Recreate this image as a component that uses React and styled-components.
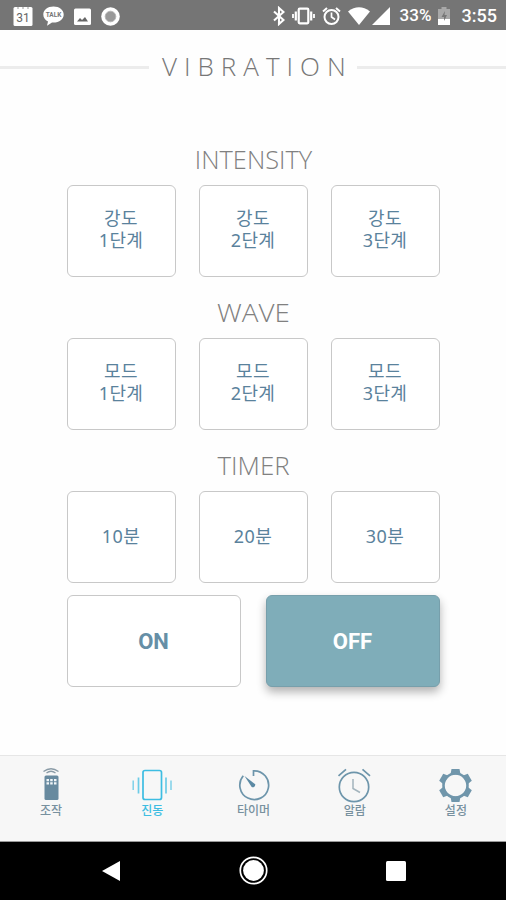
import React from "react"
import { useState } from "react"
import styled, { createGlobalStyle } from "styled-components"

const intensity = [["강도", "1단계"], ["강도", "2단계"], ["강도", "3단계"]];
const wave = [["모드", "1단계"], ["모드", "2단계"], ["모드", "3단계"]];
const timer = [["10분"], ["20분"], ["30분"]];

const tabs = [
    { name: "조작", icon: <RemoteIcon /> },
    { name: "진동", icon: <VibrationIcon /> },
    { name: "타이머", icon: <TimerIcon /> },
    { name: "알람", icon: <AlarmIcon /> },
    { name: "설정", icon: <GearIcon /> },
];

export default function App() {
    const [power, setPower] = useState("OFF");
    const [tab, setTab] = useState("진동");
    return (
        <>
            <GlobalStyle />
            <Screen>
                <StatusBar />
                <Header>
                    <Line />
                    <Title>VIBRATION</Title>
                    <Line />
                </Header>
                <Content>
                    <Group title="INTENSITY" stretch={1.015} items={intensity} />
                    <Group title="WAVE" stretch={1.11} items={wave} />
                    <Group title="TIMER" stretch={1.035} items={timer} />
                    <PowerRow>
                        <PowerButton $active={power === "ON"} onClick={() => setPower("ON")}>ON</PowerButton>
                        <PowerButton $active={power === "OFF"} onClick={() => setPower("OFF")}>OFF</PowerButton>
                    </PowerRow>
                </Content>
                <TabBar>
                    {tabs.map((item) => (
                        <Tab key={item.name} $active={item.name === tab} onClick={() => setTab(item.name)}>
                            {item.icon}
                            <p>{item.name}</p>
                        </Tab>
                    ))}
                </TabBar>
                <NavBar>
                    <svg width="20" height="22" viewBox="0 0 20 22"><path d="M1 11L19 1V21Z" fill="#fff" /></svg>
                    <svg width="30" height="30" viewBox="0 0 30 30">
                        <circle cx="14.500" cy="14.500" r="13.200" fill="none" stroke="#fff" strokeWidth="1.700" />
                        <circle cx="14.500" cy="14.500" r="10.400" fill="#fff" />
                    </svg>
                    <svg width="20" height="20" viewBox="0 0 20 20"><rect width="20" height="20" rx="1.500" fill="#fff" /></svg>
                </NavBar>
            </Screen>
        </>
    );
}

function Group({ title, stretch, items }) {
    return (
        <Section>
            <SectionTitle $stretch={stretch}>{title}</SectionTitle>
            <ButtonRow>
                {items.map((lines) => (
                    <OptionButton key={lines.join("")} $lines={lines.length}>
                        {lines.map((line) => <span key={line}>{line}</span>)}
                    </OptionButton>
                ))}
            </ButtonRow>
        </Section>
    );
}

function StatusBar() {
    return (
        <Status>
            <StatusLeft>
                <svg width="20" height="22" viewBox="0 0 20 22">
                    <rect x="0.500" y="2" width="19" height="19" rx="1.500" fill="#fff" />
                    <path d="M5 2V4M10 2V4M15 2V4" stroke="#999" strokeWidth="1" />
                    <text x="10" y="17" textAnchor="middle" fontSize="12" fontWeight="400" fill="#666">31</text>
                </svg>
                <svg width="21" height="22" viewBox="0 0 21 22">
                    <path d="M10.500 1.500C4.700 1.500 .3 5 .3 9.500C.3 12.500 2 15 5 16.400L4 20.800L9 17.500C16 18 20.700 14.300 20.700 9.500C20.700 5 16.300 1.500 10.500 1.500Z" fill="#fff" />
                    <text x="10.500" y="11.800" textAnchor="middle" fontSize="6.500" fontWeight="700" fill="#777">TALK</text>
                </svg>
                <svg width="17" height="22" viewBox="0 0 17 22">
                    <rect x="0" y="3.500" width="17" height="16.500" rx="1.500" fill="#fff" />
                    <path d="M3 16.500L6 13L8 15L11 12L14 16.500Z" fill="#666" />
                </svg>
                <svg width="19" height="22" viewBox="0 0 19 22">
                    <circle cx="9.500" cy="11.500" r="9.300" fill="#fff" />
                    <circle cx="9.500" cy="11.500" r="5.300" fill="#999" stroke="#b4b4b4" />
                </svg>
            </StatusLeft>
            <StatusRight>
                <svg width="12" height="20" viewBox="0 0 12 20">
                    <path d="M1 5.500L10.500 14L6 18V2L10.500 6L1 14.500" fill="none" stroke="#fff" strokeWidth="2.100" />
                </svg>
                <svg width="23" height="20" viewBox="0 0 23 20">
                    <rect x="6.700" y="2.700" width="9.600" height="14.600" rx="1" fill="none" stroke="#fff" strokeWidth="2.200" />
                    <path d="M3.800 5.500V14.500M19.200 5.500V14.500" stroke="#fff" strokeWidth="2.200" />
                    <path d="M1 8V12M22 8V12" stroke="#fff" strokeWidth="1.800" />
                </svg>
                <svg width="19" height="20" viewBox="0 0 19 20">
                    <circle cx="9.500" cy="11" r="7" fill="none" stroke="#fff" strokeWidth="2" />
                    <path d="M9.500 6.500V11L13 13.500" fill="none" stroke="#fff" strokeWidth="1.700" />
                    <path d="M1 5.500L5 2M18 5.500L14 2" stroke="#fff" strokeWidth="2" />
                </svg>
                <svg width="22" height="20" viewBox="0 0 22 20"><path d="M0 5.500Q11 -2.800 22 5.500L11 19Z" fill="#fff" /></svg>
                <svg width="18" height="20" viewBox="0 0 18 20"><path d="M18 1V19H0Z" fill="#fff" /></svg>
                <Percent>33%</Percent>
                <svg width="12" height="20" viewBox="0 0 12 20">
                    <path d="M3.500 1H8.500V3H12V19H0V3H3.500Z" fill="#a8a8a8" />
                    <path d="M0 13H12V19H0Z" fill="#fff" />
                    <path d="M7 5L3.500 11H6V15L9 9H6.500Z" fill="#777" />
                </svg>
                <Clock>3:55</Clock>
            </StatusRight>
        </Status>
    );
}

function RemoteIcon() {
    return (
        <svg width="44" height="36" viewBox="0 0 44 36">
            <path d="M14.500 4.500Q22 -1 29.500 4.500" fill="none" stroke="#8a9ba6" strokeWidth="1.300" />
            <path d="M17.500 6Q22 2.500 26.500 6" fill="none" stroke="#8a9ba6" strokeWidth="1.300" />
            <rect x="15.500" y="8.500" width="14" height="24.500" rx="1.500" fill="#688a9f" />
            <path d="M17.500 12H20V14.300H17.500ZM21.200 12H23.700V14.300H21.200ZM25 12H27.500V14.300H25ZM17.500 15.300H20V17.600H17.500ZM21.200 15.300H23.700V17.600H21.200ZM25 15.300H27.500V17.600H25Z" fill="#f1f6f9" />
        </svg>
    );
}

function VibrationIcon() {
    return (
        <svg width="44" height="36" viewBox="0 0 44 36" fill="none" stroke="#3dbde2">
            <rect x="13" y="3.500" width="18.500" height="29" rx="2" strokeWidth="1.700" />
            <path d="M8.500 10.500V26.500M36 10.500V26.500" strokeWidth="1.700" opacity="0.75" />
            <path d="M3.200 13.500V23M41 13.500V23" strokeWidth="1.500" opacity="0.65" />
        </svg>
    );
}

function TimerIcon() {
    return (
        <svg width="44" height="36" viewBox="0 0 44 36" fill="none" stroke="#6d95ab">
            <path d="M22.500 9V3.800A14.400 14.400 0 1 1 12.300 8.800" strokeWidth="1.700" />
            <path d="M13.500 9L24.200 17.200A2.500 2.500 0 0 1 20.700 20Z" fill="#5c8aa4" stroke="none" />
        </svg>
    );
}

function AlarmIcon() {
    return (
        <svg width="44" height="36" viewBox="0 0 44 36" fill="none" stroke="#6d95ab">
            <circle cx="22" cy="20" r="14.700" strokeWidth="1.700" />
            <path d="M6.500 8.800L14 2.300M38 8.800L30.500 2.300" strokeWidth="1.700" />
            <path d="M21 12V21.500L28 25.500" stroke="#a3b4bd" strokeWidth="1.500" />
        </svg>
    );
}

function GearIcon() {
    return (
        <svg width="44" height="36" viewBox="0 0 44 36">
            <circle cx="22.500" cy="18.500" r="12" fill="none" stroke="#7096ab" strokeWidth="2.600" />
            {[0, 60, 120, 180, 240, 300].map((angle) => (
                <path key={angle} d="M18.500 2H26.500L27.500 7.500H17.500Z" transform={`rotate(${angle} 22.5 18.5)`} fill="#7096ab" />
            ))}
        </svg>
    );
}

const GlobalStyle = createGlobalStyle`
  * {
    box-sizing: border-box;
  }
  body {
    margin: 0;
    background: #fefefe;
    font-family: "Noto Sans", "Noto Sans CJK KR", sans-serif;
  }
  p, h1, h2 {
    margin: 0;
  }
  svg {
    display: block;
    flex-shrink: 0;
  }
  button {
    font-family: inherit;
    padding: 0;
    cursor: pointer;
  }
`;

const Screen = styled.div`
  width: 506px;
  height: 900px;
  display: flex;
  flex-direction: column;
  overflow: hidden;
`;

const Status = styled.div`
  height: 30px;
  flex-shrink: 0;
  background: #757575;
  color: #ffffff;
  display: flex;
  align-items: center;
  justify-content: space-between;
  padding: 1px 9px 0 13px;
  font-family: Roboto, sans-serif;
  font-weight: 500;
`;

const StatusLeft = styled.div`
  display: flex;
  gap: 10px;
`;

const StatusRight = styled.div`
  display: flex;
  align-items: center;
  gap: 7px;
  svg:nth-of-type(5) {
    margin-left: -5px;
  }
`;

const Percent = styled.span`
  width: 33px;
  margin-left: 3px;
  margin-right: -2px;
  font-size: 17px;
  line-height: 29px;
  white-space: nowrap;
`;

const Clock = styled.span`
  font-size: 18px;
  line-height: 29px;
  margin-left: 5px;
`;

const Header = styled.div`
  height: 74px;
  flex-shrink: 0;
  display: flex;
  align-items: center;
  justify-content: space-between;
`;

const Line = styled.div`
  width: 149px;
  height: 3px;
  background: #ececec;
`;

const Title = styled.h1`
  width: 184px;
  padding-left: 1px;
  padding-bottom: 2px;
  font-family: "Open Sans", sans-serif;
  font-size: 26px;
  font-weight: 300;
  line-height: 36px;
  letter-spacing: 7px;
  color: #777777;
  white-space: nowrap;
`;

const Content = styled.div`
  width: 373px;
  margin: 0 auto;
  padding-top: 40px;
  flex: 1;
`;

const Section = styled.div`
  height: 153px;
`;

const SectionTitle = styled.h2`
  height: 41px;
  font-family: "Open Sans", sans-serif;
  font-size: 25px;
  font-weight: 300;
  line-height: 30px;
  text-align: center;
  color: #808080;
  transform: scaleX(${(props) => props.$stretch});
`;

const ButtonRow = styled.div`
  display: flex;
  justify-content: space-between;
`;

const Button = styled.button`
  height: 92px;
  background: #ffffff;
  border: 1px solid #c8c8c8;
  border-radius: 6px;
  display: flex;
  flex-direction: column;
  align-items: center;
  justify-content: center;
`;

const OptionButton = styled(Button)`
  width: 109px;
  padding-bottom: ${(props) => (props.$lines > 1 ? "4px" : "3px")};
  color: #5a829c;
  font-size: 18px;
  line-height: 22px;
  letter-spacing: 0.4px;
`;

const PowerRow = styled.div`
  display: flex;
  justify-content: space-between;
  margin-top: -8px;
`;

const PowerButton = styled(Button)`
  width: 174px;
  font-family: Roboto, sans-serif;
  font-size: 22px;
  font-weight: 700;
  color: ${(props) => (props.$active ? "#ffffff" : "#668fa6")};
  background: ${(props) => (props.$active ? "#7fadb9" : "#ffffff")};
  border-color: ${(props) => (props.$active ? "#779fab" : "#c8c8c8")};
  box-shadow: ${(props) => (props.$active ? "0 5px 10px rgba(0, 0, 0, 0.3)" : "none")};
`;

const TabBar = styled.div`
  height: 87px;
  flex-shrink: 0;
  background: #f7f7f7;
  border-top: 1px solid #e6e6e6;
  border-bottom: 1px solid #999999;
  display: flex;
`;

const Tab = styled.div`
  flex: 1;
  display: flex;
  flex-direction: column;
  align-items: center;
  padding-top: 11px;
  cursor: pointer;
  p {
    font-size: 12px;
    font-weight: 500;
    line-height: 16px;
    padding-left: 1px;
    color: ${(props) => (props.$active ? "#3dbde2" : "#78919f")};
  }
`;

const NavBar = styled.div`
  height: 58px;
  flex-shrink: 0;
  background: #000000;
  display: flex;
  align-items: center;
  justify-content: space-between;
  padding: 0 100px 0 101px;
`;
